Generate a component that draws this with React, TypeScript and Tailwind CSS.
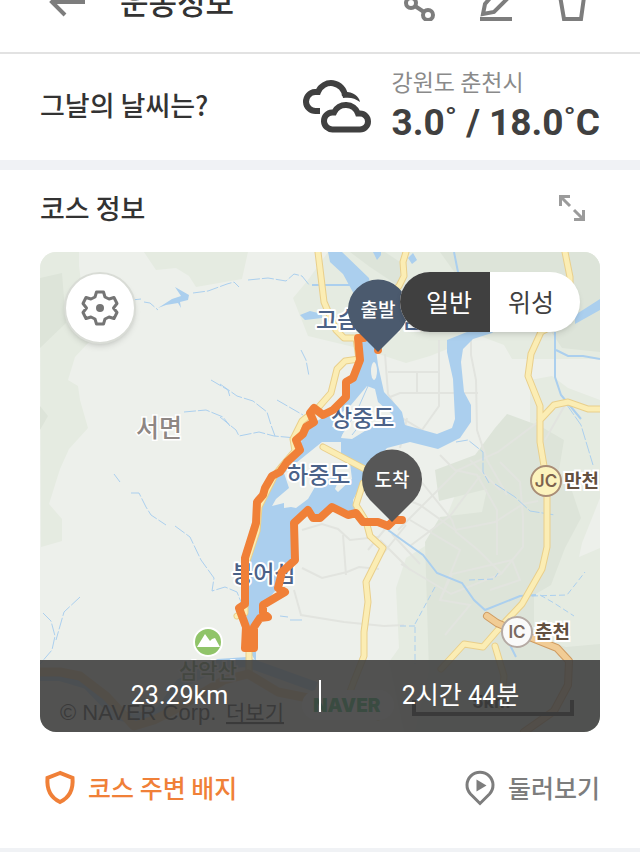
import React, { useState } from "react";
import { twMerge } from "tailwind-merge";

const mapLabel =
  "fill-[#4b6288] stroke-white stroke-4 text-[23px] font-medium [paint-order:stroke] [stroke-linejoin:round]";

const routePath =
  "M364 338 H358 L360 360 L353 378 L346 382 V397 L333 410 L323 415 L314 408 L310 413 L314 422 L306 427 L303 434 L296 440 L300 450 L287 462 L280 472 L272 476 L265 488 L263 495 L257 502 L256 523 L245 558 V604 L239 608 L246 627 L245 648 H254 V627 L260 618 L268 617 L263 613 V605 L285 592 L278 588 L282 572 L295 560 L294 523 L308 510 L313 518 H320 L332 507 L348 515 L356 513 L363 522 H378 L388 526 L394 520 H402";

const lakePath =
  "M361 338 L375 342 L378 365 L384 392 L398 407 L402 412 L405 425 L437 434 L452 428 L455 419 L453 379 L447 352 V340 L472 330 L500 326 L492 333 L473 339 L463 349 L461 362 L464 392 L471 405 V422 L460 438 L438 449 L410 442 L387 448 L375 462 L362 483 L353 500 L356 515 H345 L332 507 L320 518 L308 510 L294 525 L295 560 L282 574 L276 590 L262 606 L256 625 V662 L249 650 L245 600 V558 L257 523 L258 502 L272 478 L300 450 L303 430 L325 416 L345 397 L353 378 L360 360 Z";

const Header = () => {
  return (
    <header className="-mt-[50px] flex h-[104px] items-center border-b-2 border-[#e2e2e2] px-12 text-[#7d7d7d]">
      <button type="button" aria-label="뒤로">
        <svg width="40" height="40" viewBox="0 0 40 40" fill="none" stroke="currentColor" strokeWidth="4">
          <path d="M37 21H5M17 8 4 21 17 34" />
        </svg>
      </button>
      <h1 className="ml-8 flex-1 text-[31px] leading-10 font-medium text-[#333]">
        운동정보
      </h1>
      <div className="flex gap-9">
        <button type="button" aria-label="공유">
          <svg width="40" height="40" viewBox="0 0 40 40" fill="none" stroke="currentColor" strokeWidth="4">
            <circle cx="11" cy="22" r="5" />
            <circle cx="28" cy="34" r="5" />
            <circle cx="28" cy="8" r="5" />
            <path d="m15 25 9 6M15 18l9-7" />
          </svg>
        </button>
        <button type="button" aria-label="수정">
          <svg width="40" height="40" viewBox="0 0 40 40" fill="none" stroke="currentColor" strokeWidth="4">
            <path d="M7 33 9 23 26 3l10 10-18 18Z" />
            <path d="M4 38h32" />
          </svg>
        </button>
        <button type="button" aria-label="삭제">
          <svg width="40" height="40" viewBox="0 0 40 40" fill="none" stroke="currentColor" strokeWidth="4">
            <path d="M7 9l5 29h17l4-29M3 9h34" />
          </svg>
        </button>
      </div>
    </header>
  );
};

const Weather = () => {
  return (
    <section className="flex h-[116px] items-center border-b-[10px] border-[#f0f2f5] px-10">
      <h2 className="flex-1 pb-1 text-[27px] leading-8 font-medium text-[#333]">
        그날의 날씨는?
      </h2>
      <svg width="70" height="60" viewBox="302 77 70 60" fill="none" stroke="#404040" strokeWidth="6">
        <path d="M320 111h-4a9.500 9.500 0 0 1-1-19h3A14 14 0 0 1 345 96" />
        <path d="M342 92c10-1 17 4 18 10-5-4-10-5-17-4Z" fill="#404040" stroke="none" />
        <path
          d="M333 129.500a8.500 8.500 0 0 1-1-17h2a13 13 0 0 1 24 1h2a8 8 0 0 1 0 16Z"
          stroke="#fff"
          strokeWidth="11"
        />
        <path
          d="M333 129.500a8.500 8.500 0 0 1-1-17h2a13 13 0 0 1 24 1h2a8 8 0 0 1 0 16Z"
          fill="#fff"
        />
      </svg>
      <div className="ml-5">
        <p className="text-[23px] leading-8 text-[#8a8a8a]">강원도 춘천시</p>
        <p className="font-[Roboto] text-[37px] leading-13 font-bold text-[#404040]">
          3.0˚ / 18.0˚C
        </p>
      </div>
    </section>
  );
};

const CourseMap = () => {
  return (
    <svg
      className="block h-[480px] w-full bg-[#edf0eb]"
      viewBox="40 252 560 480"
      preserveAspectRatio="xMidYMid slice"
      role="img"
      aria-label="코스 지도"
    >
      {/* hills */}
      <g fill="#e5ebe1">
        <path d="M40 252h39v14l10 76-14 15-7 23 10 6 2 14 8 28-19 21-9 20-11 35 13 15v22l-21 6Z" />
        <path d="M144 252h104l-6 27-46 8-7-11-13-8-20 2Z" />
        <path d="M328 252h272v107h-88l-8-14-24-9-50 20-24 7-40-13-58-14-15-38 15-18Z" />
        <path d="M530 380l22-4 16 12 32 12v332H404l-15-70 10-14-3-60 10-30 32-20 20-50 18-4 24-18 30-12Z" />
      </g>
      <g fill="#dde4d9">
        <path d="M40 278l22-5 4 50-26 25ZM40 406l8 10-8 14Z" />
        <path d="M350 252h35l15 10v25l-30-20Zm90 0h160v100l-38-4-24-36-30-12-48-20Z" />
        <path d="M435 470l40-15 20-27 12-14 33 12 24 14-5 30 12 18 10 30-16 30-14 37-17 10v42l32 10 34-3v88H415l14-60-4-130 15-25 42-5 5-23-48 12Z" />
      </g>
      <path d="M600 498l-18 45-3 14 21-9Z" fill="#edf0eb" />

      {/* local streets */}
      <g fill="none" stroke="#e2e4df" strokeWidth="2">
        <path d="M385 354l3 40 14 24 20 12 17-24V340M388 372h50M417 372v22M390 397l10-4h78M471 335v20l5 25 1 50 10 30 20 35M407 418l-7 30M302 530l20-6 16 5 12 11 28-3M302 568l20 10 25-6 12-5 20 2M343 535l3 40M294 590l7 25 43 7 40 4 20-1" />
        <path d="M395 495l25 10 35 25 40-8 28-18 15-3M420 480l32 40 4 12 22 18 24 24M440 455l15 15 22 5 20 35v45M500 462l20 20 3 35v30l-22 27-50 20-50-30M410 546l40-30 30-40M398 530l60-60 40-18 40-30M470 460l30 30M440 600l12-26 60-14 8 20-30 10M410 520l50 30-20 50 30 5-25 30M545 440l20-35M380 540l30 30M392 534l28 30M378 560l28-35M368 550l26-32" />
      </g>

      {/* rivers */}
      <g fill="#abcfee">
        <path d="M328 252h14l27 26 6 34h-12l-8-16-12-22-13-12Z" />
        <path d={lakePath} />
        <path d="M575 315l25-16v11l-25 14ZM300 315l10-4 12 3v4l-17 2ZM158 308l14-9 9-3-6-9 14 8-1 5-8 2 1 6-3-5-12 2Z" />
        <path d="M373 252l4 8 4-5v-3ZM408 258l5-5 4 7-5 4Z" />
      </g>
      <g fill="none" stroke="#abcfee">
        <path d="M312 285h42M454 252l5 25M555 332v45l6 18 20 24M556 350l12 6h15l17 3" strokeWidth="2" />
        <path d="M132 300l9-1M144 302l6 1 8 7M193 293l15-2 19-7 7-2 5 5M248 280l20-2 18 3 8-7 8 2 8 10M184 412l22-2 17 7 7 9M211 380l17 10 2 7M220 384l17 12 16 5 14 11 4 13 4 11M301 350l5 10 3 16M277 400l26 15M220 417l16 13 3 6 20-4 15 4 22 2M114 474l6 8M131 493h8l7 14 5 8 15 10M175 526l15 11 11 23 13 18-2 13 13-4 12 5 6 15M43 613l8 8 4 15-3 14-12 14M80 597l-16 15-8 28M280 616l8 1M290 620h12M456 442l12-2 15 12v20l6 11M567 405l14 20 6 20 6 20M495 484l20 13 15 14 25 4" strokeDasharray="12 2" />
        <path d="M435 587l-20 37v40M400 626h15M469 580l25-1 4-6M540 595l14 8 20 13M532 596l35-1 18-23" strokeDasharray="6 3" />
        <path d="M388 530l35 25 14 18 25 10 12 17 11 10 35-14 16-1M510 645l6 12" strokeWidth="2" />
      </g>
      <path d="M40 676h20l27 8 30 31 18 4 25-7 20-28 39-20 27-2 20 7 50 18" fill="none" stroke="#abcfee" strokeWidth="10" />

      {/* islands */}
      <g fill="#edf0eb">
        <path d="M367 386l-16 19-15 12-4 10 13-1-4 12 11 1 21-13 20-11-15-13-3-13Z" />
        <path d="M322 442h19v13l9 8 2 16-14 13-3-3 5-12-21 3-11 19-12 9-5-1-7 1v-5l-12 3 4-7 13-11-5-15 12-10Z" />
        <ellipse cx="374" cy="371" rx="3" ry="9" />
      </g>
      <path d="M368 386l-12 27-16 24M352 435l14-18" fill="none" stroke="#abcfee" strokeWidth="1" />

      {/* main roads */}
      <g fill="none" strokeLinejoin="round" strokeLinecap="round">
        {[
          { color: "#e9cf8b", width: 7 },
          { color: "#fbedb4", width: 5 },
        ].map((line) => (
          <path
            key={line.color}
            stroke={line.color}
            strokeWidth={line.width}
            d="M318 252l6 50 12 28 8 8h12l3 21-14 2-8 8-6 24-14 16-15 12-9 18 2 12-12 14-8 10-16 32-2 24-12 36v46l-8 3M249 650v24M406 252l-3 10 1 14-5 10-15 15M565 252l5 25v40l-29 15-10 22-3 22 12 30v36l5 30 2 20v55l-5 22-20 35-17 18-9 10-13 15-19-3-23 25M495 646l9 30-3 30M540 420l14-15 14-3 20 7h12M323 447l57 30M363 483l-7 22 10 16 4 15 13 12-17 34 2 20-4 30v24l-10 25-6 16 30 20"
          />
        ))}
        <path d="M40 672h20l20 4 26 20 28 30 20-6 20-10 50-30 24-6 30 18 30 6" stroke="#edcb91" strokeWidth="9" />
        <path d="M487 616l10 7 30 13 30 12 12 13-1 24-14 26-30 21" stroke="#cf9c62" strokeWidth="8" />
        <path d="M487 616l10 7 30 13 30 12 12 13-1 24-14 26-30 21" stroke="#f1cc95" strokeWidth="6" />
      </g>

      {/* place names */}
      <text x="136" y="437" className="fill-[#8e8784] stroke-white stroke-3 text-[25px] font-medium [paint-order:stroke]">
        서면
      </text>
      <text x="316" y="328" className={mapLabel}>고슴도치섬</text>
      <text x="331" y="426" className={mapLabel}>상중도</text>
      <text x="287" y="483" className={mapLabel}>하중도</text>
      <text x="232" y="582" className={mapLabel}>붕어섬</text>
      <text x="179" y="678" className="fill-[#5c8044] stroke-white stroke-3 text-[21px] font-medium [paint-order:stroke]">
        삼악산
      </text>
      <g className="stroke-white stroke-4 text-[19px] font-bold [paint-order:stroke]" fill="#63503f">
        <text x="564" y="488">만천</text>
        <text x="535" y="639">춘천</text>
      </g>
      <circle cx="546" cy="481" r="15" fill="#fcf3bd" stroke="#a98d76" strokeWidth="2" />
      <text x="546" y="487" textAnchor="middle" className="fill-[#7c624d] font-[Inter] text-[17px] font-semibold">
        JC
      </text>
      <circle cx="517" cy="632" r="15" fill="#fafafa" stroke="#b5aaa4" strokeWidth="2" />
      <text x="517" y="638" textAnchor="middle" className="fill-[#7a6a62] font-[Inter] text-[17px] font-semibold">
        IC
      </text>
      <circle cx="208" cy="642" r="14" fill="#90c469" stroke="#fff" strokeWidth="2" />
      <path d="M197 647l8-13 5 7 2-2 3-1 5 9Z" fill="#fff" />

      {/* attribution and scale */}
      <rect x="302" y="690" width="92" height="30" rx="15" fill="#fff" />
      <text x="313" y="712" className="fill-[#03a84e] font-[Inter] text-[19px] font-black">NAVER</text>
      <text x="60" y="720" className="fill-black font-[Liberation_Sans] text-[22px]">© NAVER Corp.</text>
      <text x="226" y="720" className="fill-black text-[21px] underline">더보기</text>
      <text x="472" y="708" className="fill-black font-[Inter] text-[18px] font-bold">5km</text>
      <path d="M414 700v14h158v-14" fill="none" stroke="#000" strokeWidth="4" />

      {/* running route */}
      <path d={routePath} fill="none" stroke="#f08038" strokeWidth="8" strokeLinecap="round" strokeLinejoin="round" />
      <path d="M245 627h9v21h-9Z" fill="#f08038" />
      <circle cx="378" cy="350" r="4" fill="#f08038" />
      <path d="M378 352l-22-22a30 30 0 1 1 44 0Z" fill="#4b5a6e" />
      <path d="M392 522l-22-22a30 30 0 1 1 44 0Z" fill="#575757" />
      <g fill="#fff" textAnchor="middle" className="text-[19px] font-medium">
        <text x="378" y="317">출발</text>
        <text x="392" y="487">도착</text>
      </g>
    </svg>
  );
};

const Course = () => {
  const [mapType, setMapType] = useState("normal");

  return (
    <section className="px-10">
      <div className="mb-[6px] flex h-[76px] items-center justify-between">
        <h2 className="text-[27px] leading-8 font-medium text-[#333]">코스 정보</h2>
        <button type="button" aria-label="지도 확대" className="mr-3">
          <svg width="32" height="32" viewBox="0 0 32 32" fill="none" stroke="#9b9b9b" strokeWidth="3">
            <path d="M4.500 14V4.500H14M5 5l9 9M18 27.500h9.500V18M27 27l-9-9" />
          </svg>
        </button>
      </div>
      <div className="relative overflow-hidden rounded-2xl">
        <CourseMap />
        <button
          type="button"
          aria-label="지도 설정"
          className="absolute top-5 left-6 flex h-[72px] w-[72px] items-center justify-center rounded-full border-2 border-[#d9dcd6] bg-white shadow-md"
        >
          <svg width="38" height="38" viewBox="0 0 38 38" fill="none" stroke="#757575" strokeWidth="3" strokeLinejoin="round">
            <path d="M15.500 3h7l1.500 5 4 2 5-1.500 3 6-3.500 4.500 3.500 4.500-3 6-5-1.500-4 2-1.500 5h-7L14 30l-4-2-5 1.500-3-6L5.500 19 2 14.500l3-6L10 10l4-2Z" />
            <circle cx="19" cy="19" r="4" fill="#757575" stroke="none" />
          </svg>
        </button>
        <div className="absolute top-5 right-5 flex h-[60px] w-[180px] overflow-hidden rounded-full bg-white text-[25px] shadow-md">
          <button
            type="button"
            aria-pressed={mapType === "normal"}
            onClick={() => setMapType("normal")}
            className={twMerge(
              "flex-1 pl-2 text-[#404040]",
              mapType === "normal" && "bg-[#404040] text-white"
            )}
          >
            일반
          </button>
          <button
            type="button"
            aria-pressed={mapType === "satellite"}
            onClick={() => setMapType("satellite")}
            className={twMerge(
              "flex-1 pr-2 text-[#404040]",
              mapType === "satellite" && "bg-[#404040] text-white"
            )}
          >
            위성
          </button>
        </div>
        <div className="absolute inset-x-0 bottom-0 flex h-[72px] items-center bg-[#404040]/90 text-center font-[Roboto,'Noto_Sans_CJK_KR',sans-serif] text-[25px] text-white">
          <span className="flex-1">23.29km</span>
          <span className="h-8 w-0.5 bg-white" />
          <span className="flex-1">2시간 44분</span>
        </div>
      </div>
      <div className="mb-[6px] flex h-[110px] items-center justify-between text-[25px] leading-8 font-medium">
        <a href="#badges" className="flex items-center gap-2 text-[#f08038]">
          <svg width="40" height="40" viewBox="0 0 40 40" fill="none" stroke="currentColor" strokeWidth="4">
            <path d="M20 6 7.500 11c-1 12 4 20 12.500 24 8.500-4 13.500-12 12.500-24Z" />
          </svg>
          코스 주변 배지
        </a>
        <a href="#around" className="flex items-center gap-2 text-[#7d7d7d]">
          <svg width="40" height="40" viewBox="0 0 40 40" fill="none" stroke="currentColor" strokeWidth="3">
            <path d="M20 36.500 10.500 27a13 13 0 1 1 19 0Z" />
            <path d="M16.500 12.500v12l10-6Z" fill="currentColor" stroke="none" />
          </svg>
          둘러보기
        </a>
      </div>
    </section>
  );
};

const App = () => {
  return (
    <main className="overflow-hidden bg-white font-['Noto_Sans_CJK_KR',sans-serif]">
      <Header />
      <Weather />
      <Course />
      <div className="h-1 bg-[#f0f2f5]" />
    </main>
  );
};

export default App;
